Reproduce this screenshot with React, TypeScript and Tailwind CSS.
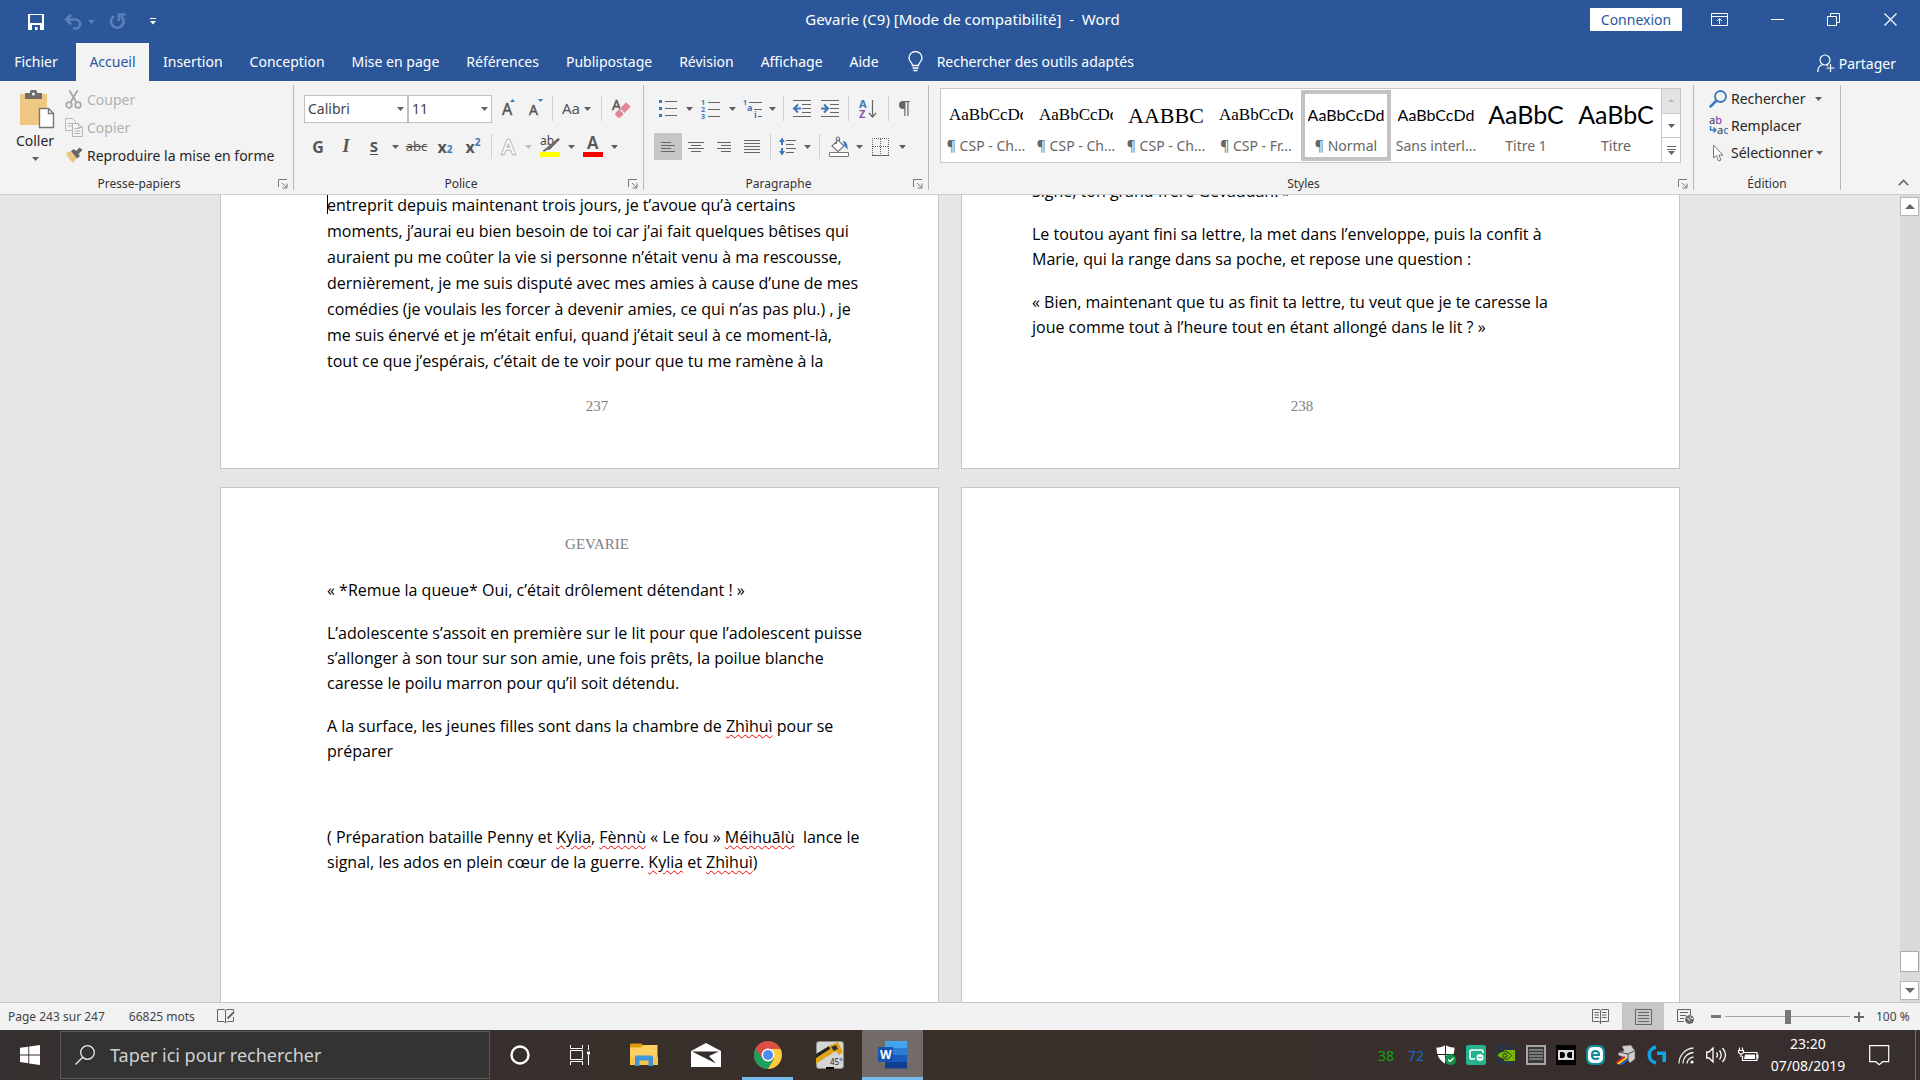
import { useState } from 'react'
import type { ReactNode } from 'react'
import { clsx } from 'clsx'

const UI = "font-['Noto_Sans','Open_Sans',sans-serif]"
const BODY = "font-['Open_Sans','Noto_Sans',sans-serif]"
const SAMPLE = "font-['Lato','Open_Sans',sans-serif]"
const TIMES = "font-['Liberation_Serif',serif]"

const tabs = ['Insertion', 'Conception', 'Mise en page', 'Références', 'Publipostage', 'Révision', 'Affichage', 'Aide']

const styles: { sample: string; name: string; look: string }[] = [
  { sample: 'AaBbCcDd', name: '¶ CSP - Ch...', look: `${TIMES} px-1 text-[17px]` },
  { sample: 'AaBbCcDd', name: '¶ CSP - Ch...', look: `${TIMES} px-1 text-[17px]` },
  { sample: 'AABBC', name: '¶ CSP - Ch...', look: `${TIMES} justify-center text-[22px]` },
  { sample: 'AaBbCcDd', name: '¶ CSP - Fr...', look: `${TIMES} px-1 text-[17px]` },
  { sample: 'AaBbCcDd', name: '¶ Normal', look: `${SAMPLE} justify-center text-[16px]` },
  { sample: 'AaBbCcDd', name: 'Sans interl...', look: `${SAMPLE} justify-center text-[16px]` },
  { sample: 'AaBbC', name: 'Titre 1', look: `${SAMPLE} justify-center text-[25px]` },
  { sample: 'AaBbC', name: 'Titre', look: `${SAMPLE} justify-center text-[25px]` },
]

/* ---------- small pieces ---------- */

function Caret({ className = 'text-[#5f5f5f]' }: { className?: string }) {
  return (
    <svg width="7" height="4" viewBox="0 0 7 4" className={clsx('shrink-0', className)} aria-hidden="true">
      <path d="M0 0h7L3.5 4z" fill="currentColor" />
    </svg>
  )
}

function Tool({ label, className, children }: { label: string; className?: string; children: ReactNode }) {
  return (
    <button
      aria-label={label}
      className={clsx('flex h-[27px] shrink-0 items-center justify-center text-[#555] [&>svg]:overflow-visible', className ?? 'w-7')}
    >
      {children}
    </button>
  )
}

function Drop({ label, className = 'w-3.5', caret }: { label: string; className?: string; caret?: string }) {
  return (
    <Tool label={label} className={className}>
      <Caret className={caret} />
    </Tool>
  )
}

function Sep({ className = 'w-2' }: { className?: string }) {
  return (
    <span className={clsx('flex h-[25px] shrink-0 justify-center', className)}>
      <span className="w-px bg-[#cfcfcf]" />
    </span>
  )
}

function Group({ title, launcher, className, children }: { title: string; launcher?: boolean; className?: string; children: ReactNode }) {
  return (
    <section className={clsx('flex shrink-0', className)}>
      <div className="flex min-w-0 flex-1 flex-col">
        <div className="h-[95px]">{children}</div>
        <div className="flex h-4 items-center">
          <h2 className="flex-1 text-center text-[12px] leading-4 text-[#333]">{title}</h2>
          {launcher && (
            <button aria-label={`${title} : options`} className="mr-[3px] w-3">
              <svg width="10" height="10" viewBox="0 0 10 10" fill="none" stroke="#777">
                <path d="M.5 8V.5H9M4 4l4 4M9 4.500V9H4.500" />
              </svg>
            </button>
          )}
        </div>
      </div>
      <span className="my-1 w-px bg-[#b9b9b9]" />
    </section>
  )
}

function Lines({ rows }: { rows: [number, number][] }) {
  return (
    <svg width={16} height={rows.length * 3} viewBox={`0 0 16 ${rows.length * 3}`} stroke="#666" aria-hidden="true">
      {rows.map(([a, b], i) => (
        <path key={i} d={`M${a} ${i * 3 + 1.5}H${b}`} />
      ))}
    </svg>
  )
}

/* ---------- title bar and tabs ---------- */

function TitleBar() {
  return (
    <header className="flex h-[43px] shrink-0 items-center bg-[#2b579a] text-white">
      <div className="flex flex-1 items-center pl-7">
        <button aria-label="Enregistrer">
          <svg width="16" height="16" viewBox="0 0 16 16">
            <path d="M0 0h16v16H0z" fill="#fff" />
            <path d="M2 1h12v8H2zM4 11h8v5H9.500v-3H7v3H4z" fill="#2b579a" />
          </svg>
        </button>
        <button aria-label="Annuler" className="ml-5 flex items-center gap-[5px] text-[#5b7fb8]">
          <svg width="19" height="16" viewBox="0 0 19 16" fill="none" stroke="currentColor" strokeWidth="2.600">
            <path d="M2 5.500h9.500a4.500 4.500 0 0 1 0 9H9M7 .8 2.200 5.500 7 10.200" />
          </svg>
          <Caret className="text-[#5b7fb8]" />
        </button>
        <button aria-label="Rétablir" className="ml-[14px] text-[#5b7fb8]">
          <svg width="17" height="17" viewBox="0 0 17 17" fill="none" stroke="currentColor" strokeWidth="2.600">
            <path d="M5 3a6.300 6.300 0 1 0 7 .3M16.500 1.500H10V8" />
          </svg>
        </button>
        <button aria-label="Personnaliser" className="ml-6">
          <svg width="6" height="7" viewBox="0 0 6 7" fill="#fff">
            <path d="M0 0h6v1H0zM0 3h6L3 6.500z" />
          </svg>
        </button>
      </div>
      <h1 className="mt-[-5px] whitespace-pre text-[15px]">Gevarie (C9) [Mode de compatibilité]  -  Word</h1>
      <div className="mt-[-4px] flex flex-1 items-center justify-end pr-[23px]">
        <button className="h-[23px] w-[92px] bg-white text-[14px] leading-[23px] text-[#2b579a]">Connexion</button>
        <button aria-label="Options d'affichage du ruban" className="ml-[29px]">
          <svg width="17" height="13" viewBox="0 0 17 13" fill="none" stroke="#fff">
            <path d="M.5.5h16v12H.5zM.5 3.500h16M8.500 11V6M6 8l2.500-2.500L11 8" />
          </svg>
        </button>
        <button aria-label="Réduire" className="ml-[43px]">
          <svg width="13" height="13" viewBox="0 0 13 13" stroke="#fff">
            <path d="M0 6.500h13" />
          </svg>
        </button>
        <button aria-label="Restaurer" className="ml-[43px]">
          <svg width="13" height="13" viewBox="0 0 13 13" fill="none" stroke="#fff">
            <path d="M.5 3.500h9v9h-9zM3.500 3.500v-3h9v9h-3" />
          </svg>
        </button>
        <button aria-label="Fermer" className="ml-[44px]">
          <svg width="13" height="13" viewBox="0 0 13 13" stroke="#fff" strokeWidth="1.200">
            <path d="M.5.5l12 12M12.500.5l-12 12" />
          </svg>
        </button>
      </div>
    </header>
  )
}

function Tabs() {
  return (
    <nav className="flex h-[38px] shrink-0 items-center bg-[#2b579a] text-[14px] text-white">
      <button className="h-full w-[76px] pr-1 pb-0.5">Fichier</button>
      <button className="h-full w-[73px] bg-[#f3f3f3] pb-0.5 text-[#2b579a]">Accueil</button>
      <div className="flex h-full gap-[27px] pr-[29px] pl-[14px]">
        {tabs.map((t) => (
          <button key={t} className="pb-0.5">
            {t}
          </button>
        ))}
      </div>
      <label className="flex flex-1 items-center gap-[14px] pb-0.5">
        <svg width="15" height="21" viewBox="0 0 15 21" fill="none" stroke="#fff" strokeWidth="1.300">
          <path d="M4.500 14.500c0-3-3.500-4-3.500-7.500a6.500 6.500 0 0 1 13 0c0 3.500-3.500 4.500-3.500 7.500zM4.500 17h6M5.500 19.500h4" />
        </svg>
        <input
          aria-label="Rechercher des outils"
          placeholder="Rechercher des outils adaptés"
          className="w-60 bg-transparent placeholder:text-white focus:outline-none"
        />
      </label>
      <button className="flex items-center gap-1 pt-0.5 pr-6">
        <svg width="18" height="19" viewBox="0 0 18 19" fill="none" stroke="#fff" strokeWidth="1.200">
          <circle cx="8" cy="6" r="5" />
          <path d="M.8 18c0-4 2-7 5.500-7.500M9 10.500c1 .3 1.500.8 2 1.500M13.500 10v8M9.500 14h8" />
        </svg>
        Partager
      </button>
    </nav>
  )
}

/* ---------- ribbon ---------- */

function Clipboard() {
  return (
    <Group title="Presse-papiers" launcher className="w-[294px]">
      <div className="flex pl-[14px] text-[14px]">
        <button className="flex w-[42px] flex-col items-center pt-[9px] text-[#262626]">
          <svg width="36" height="39" viewBox="0 0 36 39" className="ml-1">
            <path d="M1 4h27v31H1z" fill="#eec882" />
            <path d="M6 3h5V1.500C11 .5 12 0 13 0h3c1 0 2 .5 2 1.500V3h5v6H6z" fill="#6d6d6d" />
            <circle cx="14.500" cy="4" r="1.500" fill="#f3f3f3" />
            <path d="M20.500 18.500h9l5 5v14h-14z" fill="#fff" stroke="#777" strokeWidth="1.400" />
            <path d="M29.500 18.500v5h5" fill="none" stroke="#777" strokeWidth="1.400" />
          </svg>
          <span className="mt-0.5 leading-5">Coller</span>
          <span className="mt-1.5">
            <Caret />
          </span>
        </button>
        <div className="ml-[9px] flex flex-col pt-1">
          <button disabled className="flex h-7 items-center gap-1 text-[#b1b1b1]">
            <svg width="18" height="19" viewBox="0 0 18 19" fill="none" stroke="#a9a9a9" strokeWidth="1.800">
              <circle cx="4" cy="15" r="2.800" />
              <circle cx="13" cy="15" r="2.800" />
              <path d="M5.500 12.500 12.500.5M11.500 12.500 4.500.5" />
            </svg>
            Couper
          </button>
          <button disabled className="flex h-7 items-center gap-1 text-[#b1b1b1]">
            <svg width="18" height="19" viewBox="0 0 18 19" fill="#f3f3f3" stroke="#b5b5b5">
              <path d="M.5.5h7l3 3v9H.5zM2.500 5.500h5M2.500 8h5" />
              <path d="M7.500 5.500h6l4 4v9h-10zM9.500 10.500h5M9.500 13h6M9.500 15.500h6M13.500 5.500v4h4" />
            </svg>
            Copier
          </button>
          <button className="flex h-7 items-center gap-1 text-[#262626]">
            <svg width="18" height="17" viewBox="0 0 18 17">
              <path d="M1 6l5-2 6 7-4 5C5 13 2 10 1 6z" fill="#eec882" />
              <path d="M6 4l3-2 2 2 3.500-3.500 3 2.500-4 4L15 9l-3 2.500z" fill="#666" />
            </svg>
            Reproduire la mise en forme
          </button>
        </div>
      </div>
    </Group>
  )
}

function Combo({ label, options, className }: { label: string; options: string[]; className: string }) {
  const [value, setValue] = useState(options[0])
  return (
    <span className={clsx('relative shrink-0', className)}>
      <select
        aria-label={label}
        value={value}
        onChange={(e) => setValue(e.target.value)}
        className="h-7 w-full appearance-none border border-[#c1c1c1] bg-white pl-[3px] text-[14px] text-[#444]"
      >
        {options.map((o) => (
          <option key={o}>{o}</option>
        ))}
      </select>
      <span className="pointer-events-none absolute top-3 right-1">
        <Caret />
      </span>
    </span>
  )
}

function FontGroup() {
  return (
    <Group title="Police" launcher className="w-[350px]">
      <div className="flex h-[55px] items-center pl-[10px]">
        <Combo label="Police" options={['Calibri', 'Arial']} className="w-[104px]" />
        <Combo label="Taille" options={['11', '12', '14']} className="w-[84px]" />
        <Tool label="Augmenter la taille" className="ml-0.5 w-[30px]">
          <svg width="16" height="20" viewBox="0 0 16 20">
            <text x="1" y="16" fontSize="16" fill="#555" stroke="#555" strokeWidth=".4">A</text>
            <path d="M9 3l2.500-3L14 3z" fill="#3b78bd" />
          </svg>
        </Tool>
        <Tool label="Réduire la taille" className="w-6">
          <svg width="16" height="20" viewBox="0 0 16 20">
            <text x="1" y="16" fontSize="14" fill="#555" stroke="#555" strokeWidth=".4">A</text>
            <path d="M10 0h5l-2.500 3z" fill="#3b78bd" />
          </svg>
        </Tool>
        <Sep />
        <Tool label="Modifier la casse" className="w-[41px] gap-1 text-[15px]">
          Aa
          <Caret />
        </Tool>
        <Sep />
        <Tool label="Effacer la mise en forme" className="w-8">
          <svg width="19" height="20" viewBox="0 0 19 20">
            <text x="0" y="11" fontSize="14" fill="#555" stroke="#555" strokeWidth=".4">A</text>
            <path d="M3 14l4-4 5 5-4 4H6l-3-3zM8 9l6-6 5 4.500-6.500 7z" fill="#e6859a" stroke="#f3f3f3" strokeWidth=".6" />
          </svg>
        </Tool>
      </div>
      <div className="mt-[-3px] flex items-center pl-[10px]">
        <Tool label="Gras" className="w-7 text-[16px] font-bold">G</Tool>
        <Tool label="Italique" className={clsx('w-7 text-[18px] font-bold italic', TIMES)}>I</Tool>
        <Tool label="Souligné" className="w-7 text-[15px] font-bold underline underline-offset-2">S</Tool>
        <Drop label="Style de soulignement" />
        <Tool label="Barré" className="w-[29px] text-[13px] line-through">abc</Tool>
        <Tool label="Indice" className="w-7 text-[16px] font-bold">
          x<sub className="text-[10px] text-[#3b78bd]">2</sub>
        </Tool>
        <Tool label="Exposant" className="w-7 text-[16px] font-bold">
          x<sup className="text-[10px] text-[#3b78bd]">2</sup>
        </Tool>
        <Sep />
        <Tool label="Effets de texte" className="w-[27px]">
          <svg width="20" height="20" viewBox="0 0 20 20">
            <text x="3" y="17" fontSize="20" fill="#fff" stroke="#bdbdbd" strokeWidth="2.400" paintOrder="stroke">A</text>
          </svg>
        </Tool>
        <Drop label="Effets" className="w-3" caret="text-[#bdbdbd]" />
        <Tool label="Surlignage" className="w-[31px]">
          <svg width="20" height="21" viewBox="0 0 20 21">
            <text x="0" y="9" fontSize="12" fill="#444">ab</text>
            <path d="M18 2.500l1.500 1L10 13l-3 .5L5 15H3l5-4z" fill="#6d6d6d" stroke="#6d6d6d" />
            <path d="M0 16h20v5H0z" fill="#ff0" />
          </svg>
        </Tool>
        <Drop label="Couleur de surlignage" className="w-3" />
        <Tool label="Couleur de police" className="w-[31px]">
          <svg width="20" height="21" viewBox="0 0 20 21">
            <text x="4" y="13" fontSize="17" fontWeight="600" fill="#555">A</text>
            <path d="M0 16h20v5H0z" fill="red" />
          </svg>
        </Tool>
        <Drop label="Couleur" className="w-3" />
      </div>
    </Group>
  )
}

function ParagraphGroup() {
  return (
    <Group title="Paragraphe" launcher className="w-[285px]">
      <div className="flex h-[55px] items-center pl-[10px]">
        <Tool label="Puces">
          <svg width="18" height="18" viewBox="0 0 18 18">
            <path d="M0 0h3v3H0zM0 7h3v3H0zM0 14h3v3H0z" fill="#3b78bd" />
            <path d="M6 1.500h12M6 8.500h12M6 15.500h12" stroke="#666" />
          </svg>
        </Tool>
        <Drop label="Bibliothèque de puces" />
        <Tool label="Numérotation" className="w-[29px]">
          <svg width="19" height="20" viewBox="0 0 19 20">
            <g fontSize="7" fontWeight="700" fill="#3b78bd">
              <text x="0" y="6">1</text>
              <text x="0" y="13">2</text>
              <text x="0" y="20">3</text>
            </g>
            <path d="M7 3.500h12M7 10.500h12M7 17.500h12" stroke="#666" />
          </svg>
        </Tool>
        <Drop label="Bibliothèque de numérotation" />
        <Tool label="Liste à plusieurs niveaux" className="w-[26px]">
          <svg width="19" height="20" viewBox="0 0 19 20">
            <g fontWeight="700" fill="#3b78bd">
              <text x="0" y="6" fontSize="7">1</text>
              <text x="4" y="12" fontSize="9">a</text>
              <text x="11" y="19" fontSize="9">i</text>
            </g>
            <path d="M6 3.500h13M11 10.500h8M15 17.500h4" stroke="#666" />
          </svg>
        </Tool>
        <Drop label="Niveaux" />
        <Sep />
        <Tool label="Diminuer le retrait" className="w-[29px]">
          <svg width="18" height="17" viewBox="0 0 18 17">
            <path d="M0 .5h18M9 4.500h9M9 8.500h9M9 12.500h9M0 16.500h18" stroke="#666" />
            <path d="M8 8.500H1M5 4.500l-4 4 4 4" fill="none" stroke="#3b78bd" strokeWidth="2" />
          </svg>
        </Tool>
        <Tool label="Augmenter le retrait">
          <svg width="18" height="17" viewBox="0 0 18 17">
            <path d="M0 .5h18M9 4.500h9M9 8.500h9M9 12.500h9M0 16.500h18" stroke="#666" />
            <path d="M0 8.500h7M3 4.500l4 4-4 4" fill="none" stroke="#3b78bd" strokeWidth="2" />
          </svg>
        </Tool>
        <Sep />
        <Tool label="Trier" className="w-8">
          <svg width="18" height="20" viewBox="0 0 18 20">
            <text x="0" y="9" fontSize="11" fontWeight="700" fill="#3b78bd">A</text>
            <text x="0" y="19" fontSize="11" fontWeight="700" fill="#8a4fb0">Z</text>
            <path d="M13.500 1v17M10 14l3.500 4 3.500-4" fill="none" stroke="#666" strokeWidth="1.200" />
          </svg>
        </Tool>
        <Sep />
        <Tool label="Afficher tout" className="w-6">
          <svg width="11" height="15" viewBox="0 0 11 15" fill="#666">
            <path d="M11 0v1H9.500v14h-1.200V1H6.500v14H5.300V8H4a4 4 0 0 1 0-8z" />
          </svg>
        </Tool>
      </div>
      <div className="mt-[-3px] flex items-center pl-[10px]">
        <Tool label="Aligner à gauche" className="w-7 bg-[#c6c6c6]">
          <Lines rows={[[1, 11], [1, 15], [1, 11], [1, 15]]} />
        </Tool>
        <Tool label="Centrer">
          <Lines rows={[[0, 16], [3, 13], [0, 16], [3, 13]]} />
        </Tool>
        <Tool label="Aligner à droite">
          <Lines rows={[[1, 15], [5, 15], [1, 15], [5, 15]]} />
        </Tool>
        <Tool label="Justifier">
          <Lines rows={[[0, 16], [0, 16], [0, 16], [0, 16], [0, 16]]} />
        </Tool>
        <Sep />
        <Tool label="Interligne">
          <svg width="18" height="19" viewBox="0 0 18 19">
            <path d="M0 5l3-4.500L6 5H4v3H2V5zM0 14h2v-3h2v3h2l-3 4.500z" fill="#3b78bd" />
            <path d="M7 3.500h10M7 7.500h8M7 11.500h10M7 15.500h8" stroke="#666" />
          </svg>
        </Tool>
        <Drop label="Espacement" className="w-[10px]" />
        <Sep className="w-3.5" />
        <Tool label="Trame de fond" className="w-[26px]">
          <svg width="20" height="21" viewBox="0 0 20 21" fill="none" stroke="#777">
            <path d="M9 4l6 6-6 5.500L3 10zM7.500 8V2.500a1.500 1.500 0 0 1 3 0V6" strokeWidth="1.200" fill="#fff" />
            <path d="M14 5c3 0 5 3 4.500 9-1-2-2-3-3-4z" fill="#3b78bd" stroke="none" />
            <path d="M.5 16.500h19v4H.5z" fill="#fff" />
          </svg>
        </Tool>
        <Drop label="Couleur de trame" />
        <Tool label="Bordures" className="w-[29px]">
          <svg width="17" height="18" viewBox="0 0 17 18" fill="none" stroke="#666">
            <path d="M.5 17V.5h16V17M8.500 1v16M1 8.500h15" strokeDasharray="1 1" />
            <path d="M0 17.500h17" />
          </svg>
        </Tool>
        <Drop label="Choix des bordures" />
      </div>
    </Group>
  )
}

function StylesGroup() {
  return (
    <Group title="Styles" launcher className="w-[765px]">
      <div className="pt-[7px] pr-3 pl-[11px]">
        <div className="flex h-[75px] border border-[#c8c8c8] bg-white">
          {styles.map((s, i) => (
            <button
              key={i}
              className={clsx(
                'mt-px flex h-[71px] w-[90px] shrink-0 flex-col overflow-hidden border-4',
                i === 4 ? 'border-[#c3c3c3]' : 'border-transparent',
              )}
            >
              <span className={clsx('flex h-[42px] w-full items-center overflow-hidden whitespace-nowrap text-black', s.look)}>
                <span className="overflow-hidden">{s.sample}</span>
              </span>
              <span className="w-full text-center text-[14px] leading-5 whitespace-nowrap text-[#666]">{s.name}</span>
            </button>
          ))}
          <div className="ml-auto flex w-[19px] flex-col border-l border-[#c8c8c8]">
            <button aria-label="Précédent" className="flex flex-1 items-center justify-center bg-[#e3e3e3]">
              <svg width="6" height="3" viewBox="0 0 6 3" fill="#b5b5b5">
                <path d="M0 3h6L3 0z" />
              </svg>
            </button>
            <button aria-label="Suivant" className="flex flex-1 items-center justify-center border-y border-[#c8c8c8]">
              <Caret />
            </button>
            <button aria-label="Autres styles" className="flex flex-1 items-center justify-center">
              <svg width="9" height="9" viewBox="0 0 9 9" fill="#666">
                <path d="M0 0h9v1H0zM0 3h9v1H0zM1 5h7L4.500 9z" />
              </svg>
            </button>
          </div>
        </div>
      </div>
    </Group>
  )
}

function EditGroup() {
  return (
    <Group title="Édition" className="w-[147px]">
      <div className="flex flex-col pt-1 pl-[15px] text-[14px] text-[#262626]">
        <button className="flex h-[27px] items-center">
          <svg width="18" height="18" viewBox="0 0 18 18" fill="none" stroke="#3b78bd">
            <circle cx="11.500" cy="6.500" r="5.500" strokeWidth="1.800" />
            <path d="M7.500 10.500.8 17.200" strokeWidth="2.600" />
          </svg>
          <span className="mr-[10px] ml-1">Rechercher</span>
          <Caret />
        </button>
        <button className="flex h-[27px] items-center">
          <svg width="19" height="19" viewBox="0 0 19 19" fontSize="11" fontWeight="500">
            <text x="0" y="8" fill="#555">a<tspan fill="#8a4fb0">b</tspan></text>
            <text x="8" y="18" fill="#555">a<tspan fill="#3b78bd">c</tspan></text>
            <path d="M1.500 10v4h5M4.500 11.500 7 14l-2.500 2.500" fill="none" stroke="#3b78bd" strokeWidth="1.400" />
          </svg>
          <span className="ml-[3px]">Remplacer</span>
        </button>
        <button className="flex h-[27px] items-center">
          <svg width="18" height="18" viewBox="0 0 18 18" fill="#fff" stroke="#777">
            <path d="M4.500 1v13l3-2.500 2 5.500 2.500-1-2.200-5H14z" />
          </svg>
          <span className="mr-[3px] ml-1">Sélectionner</span>
          <Caret />
        </button>
      </div>
    </Group>
  )
}

function Ribbon() {
  return (
    <div className="flex h-[114px] shrink-0 border-b border-[#cdcdcd] bg-[#f3f3f3]">
      <Clipboard />
      <FontGroup />
      <ParagraphGroup />
      <StylesGroup />
      <EditGroup />
      <div className="flex flex-1 items-end justify-end pr-[11px] pb-2">
        <button aria-label="Réduire le ruban">
          <svg width="11" height="7" viewBox="0 0 11 7" fill="none" stroke="#666" strokeWidth="1.600">
            <path d="M.8 6.200 5.500 1.500l4.700 4.700" />
          </svg>
        </button>
      </div>
    </div>
  )
}

/* ---------- document ---------- */

function Err({ children }: { children: ReactNode }) {
  return <span className="underline decoration-[#f00] decoration-wavy decoration-1 underline-offset-2">{children}</span>
}

function Para({ lines, leading = 'leading-[25px]' }: { lines: ReactNode[]; leading?: string }) {
  return (
    <p className={clsx('mb-[18px] whitespace-pre', leading)}>
      {lines.map((l, i) => (
        <span key={i} className="block">{l}</span>
      ))}
    </p>
  )
}

function Margin({ className, children }: { className: string; children: ReactNode }) {
  return <p className={clsx('text-center text-[15px] leading-5 text-[#808080]', TIMES, className)}>{children}</p>
}

function Doc() {
  return (
    <main className="flex min-h-0 flex-1 bg-[#e6e6e6]">
      <div className={clsx('flex min-w-0 flex-1 flex-col items-center overflow-hidden text-[16px] text-black', BODY)}>
        <div className="flex gap-[22px]">
          <article className="flex h-[274px] w-[719px] flex-col justify-end overflow-hidden border border-t-0 border-[#c6c6c6] bg-white pr-[71px] pl-[106px]">
            <div className="relative">
              <span className="absolute top-[-4px] left-0 h-[26px] w-px bg-black" />
              <Para
                leading="leading-[26px]"
                lines={[
                  'entreprit depuis maintenant trois jours, je t’avoue qu’à certains',
                  'moments, j’aurai eu bien besoin de toi car j’ai fait quelques bêtises qui',
                  'auraient pu me coûter la vie si personne n’était venu à ma rescousse,',
                  'dernièrement, je me suis disputé avec mes amies à cause d’une de mes',
                  'comédies (je voulais les forcer à devenir amies, ce qui n’as pas plu.) , je',
                  'me suis énervé et je m’était enfui, quand j’était seul à ce moment-là,',
                  'tout ce que j’espérais, c’était de te voir pour que tu me ramène à la',
                ]}
              />
            </div>
            <Margin className="mt-1 mb-[52px]">237</Margin>
          </article>
          <article className="flex h-[274px] w-[719px] flex-col justify-end overflow-hidden border border-t-0 border-[#c6c6c6] bg-white pr-[107px] pl-[70px]">
            <Para lines={['Signé, ton grand frère Gévaudan. »']} />
            <Para
              lines={[
                'Le toutou ayant fini sa lettre, la met dans l’enveloppe, puis la confit à',
                'Marie, qui la range dans sa poche, et repose une question :',
              ]}
            />
            <Para
              lines={[
                '« Bien, maintenant que tu as finit ta lettre, tu veut que je te caresse la',
                'joue comme tout à l’heure tout en étant allongé dans le lit ? »',
              ]}
            />
            <Margin className="mt-[38px] mb-[52px]">238</Margin>
          </article>
        </div>
        <div className="mt-[18px] flex flex-1 gap-[22px]">
          <article className="w-[719px] border border-b-0 border-[#c6c6c6] bg-white pt-[46px] pr-[71px] pl-[106px]">
            <Margin className="mb-6">GEVARIE</Margin>
            <Para lines={['« *Remue la queue* Oui, c’était drôlement détendant ! »']} />
            <Para
              lines={[
                'L’adolescente s’assoit en première sur le lit pour que l’adolescent puisse',
                's’allonger à son tour sur son amie, une fois prêts, la poilue blanche',
                'caresse le poilu marron pour qu’il soit détendu.',
              ]}
            />
            <Para
              lines={[<>A la surface, les jeunes filles sont dans la chambre de <Err>Zhìhuì</Err> pour se</>, 'préparer']}
            />
            <Para lines={[' ']} />
            <Para
              lines={[
                <>
                  ( Préparation bataille Penny et <Err>Kylia</Err>, <Err>Fènnù</Err> « Le fou » <Err>Méihuālù</Err>{'  '}lance le
                </>,
                <>
                  signal, les ados en plein cœur de la guerre. <Err>Kylia</Err> et <Err>Zhìhuì</Err>)
                </>,
              ]}
            />
          </article>
          <article className="w-[719px] border border-b-0 border-[#c6c6c6] bg-white" />
        </div>
      </div>
      <div className="flex w-5 flex-col bg-[#dadada] py-0.5 pr-px">
        <button aria-label="Défiler vers le haut" className="flex h-[19px] items-center justify-center border border-[#b5b5b5] bg-white">
          <svg width="10" height="5" viewBox="0 0 10 5" fill="#666">
            <path d="M0 5h10L5 0z" />
          </svg>
        </button>
        <div className="mt-auto mb-[9px] h-[21px] border border-[#ababab] bg-white" />
        <button aria-label="Défiler vers le bas" className="flex h-[19px] items-center justify-center border border-[#b5b5b5] bg-white">
          <svg width="10" height="5" viewBox="0 0 10 5" fill="#666">
            <path d="M0 0h10L5 5z" />
          </svg>
        </button>
      </div>
    </main>
  )
}

function StatusBar() {
  const [zoom, setZoom] = useState(100)
  return (
    <footer className="flex h-7 shrink-0 items-center border-t border-[#c6c6c6] bg-[#f2f2f2] pl-2 text-[12px] text-[#444]">
      <span>Page 243 sur 247</span>
      <span className="ml-6">66825 mots</span>
      <button aria-label="Vérification" className="ml-[22px]">
        <svg width="18" height="15" viewBox="0 0 18 15" fill="none" stroke="#666">
          <path d="M8.500 14 7 12.500H.5V.5H7l1.500 1 1.500-1h6.500v2M8.500 1.500V14l1.500-1.500h6.500V8" />
          <path d="M10.500 9.500 17 3" strokeWidth="2" />
        </svg>
      </button>
      <div className="ml-auto flex h-full items-center pr-[9px]">
        <button aria-label="Mode lecture" className="mr-[13px]">
          <svg width="17" height="15" viewBox="0 0 17 15" fill="none" stroke="#666">
            <path d="M8.500 1.500V15M.5.5H7l1.500 1 1.500-1h6.500v12H10l-1.500 1-1.500-1H.5zM2.500 3.500H7M2.500 6H7M2.500 8.500H7M10 3.500h4.500M10 6h4.500M10 8.500h4.500" />
          </svg>
        </button>
        <button aria-label="Page" className="flex h-full w-[42px] items-center justify-center bg-[#c6c6c6]">
          <svg width="17" height="16" viewBox="0 0 17 16" fill="none" stroke="#666">
            <path d="M.5.5h16v15H.5zM3 3.500h11M3 6.500h11M3 9.500h11M3 12.500h11" />
          </svg>
        </button>
        <button aria-label="Web" className="ml-[13px]">
          <svg width="17" height="15" viewBox="0 0 17 15" fill="none" stroke="#666">
            <path d="M7 12.500H.5V.5h13V6M3 3.500h8M3 6.500h6M3 9.500h4" />
            <circle cx="12.500" cy="10.500" r="4" fill="#666" />
            <path d="M10 9l2 1 .5 2M13 7.500l1 2h2" stroke="#f2f2f2" />
          </svg>
        </button>
        <button aria-label="Zoom arrière" className="ml-[17px] h-[3px] w-[10px] bg-[#777]" />
        <input
          type="range"
          aria-label="Zoom"
          min={10}
          max={190}
          value={zoom}
          onChange={(e) => setZoom(Number(e.target.value))}
          className="mx-1 h-px w-[125px] appearance-none bg-[#a6a6a6] [&::-webkit-slider-thumb]:h-[14px] [&::-webkit-slider-thumb]:w-[6px] [&::-webkit-slider-thumb]:appearance-none [&::-webkit-slider-thumb]:bg-[#777]"
        />
        <button aria-label="Zoom avant">
          <svg width="10" height="10" viewBox="0 0 10 10" stroke="#666" strokeWidth="2">
            <path d="M0 5h10M5 0v10" />
          </svg>
        </button>
        <span className="ml-3 w-[35px] whitespace-nowrap">{zoom} %</span>
      </div>
    </footer>
  )
}

/* ---------- Windows taskbar ---------- */

function Apps() {
  return (
    <div className="flex h-full items-stretch">
      <button aria-label="Cortana" className="flex w-[60px] items-center justify-center">
        <svg width="20" height="20" viewBox="0 0 20 20" fill="none" stroke="#fff" strokeWidth="2.400">
          <circle cx="10" cy="10" r="8.500" />
        </svg>
      </button>
      <button aria-label="Affichage des tâches" className="flex w-[60px] items-center justify-center">
        <svg width="21" height="20" viewBox="0 0 21 20" fill="none" stroke="#fff">
          <path d="M.5 0v3.500h12V0M.5 5.500h12v9H.5zM.5 20v-3.500h12V20M18.500 0v5M18.500 10v10" />
          <path d="M17 6.500h3v3h-3z" fill="#fff" stroke="none" />
        </svg>
      </button>
      <button aria-label="Explorateur" className="flex w-[67px] items-center justify-center">
        <svg width="28" height="24" viewBox="0 0 28 24">
          <path d="M0 2C0 1 .5.5 1.500.5h10L13 2.500V5H0z" fill="#dd9a0b" />
          <path d="M0 4.500h11l2-2.500h14.500V22H0z" fill="#fdd063" />
          <path d="M0 14h28v8H0z" fill="#f7c54c" />
          <path d="M5 23v-9c0-1 .8-1.500 1.500-1.500h15c.7 0 1.500.5 1.500 1.500v9h-4.500v-5.500h-9V23z" fill="#3f97d8" />
        </svg>
      </button>
      <button aria-label="Courrier" className="flex w-[58px] items-center justify-center">
        <svg width="30" height="24" viewBox="0 0 30 24">
          <path d="M0 8 15 0l15 8v16H0z" fill="#fff" />
          <path d="M1 8.500h27L18 13l7 7.500z" fill="#332c2a" />
        </svg>
      </button>
      <button aria-label="Chrome" className="flex w-[65px] flex-col items-center">
        <svg width="28" height="28" viewBox="0 0 28 28" className="mt-[11px]">
          <circle cx="14" cy="14" r="14" fill="#dd4f42" />
          <path d="M1.900 7A14 14 0 0 0 14 28l6-10.500H8z" fill="#1aa15f" />
          <path d="M26.500 8H14l6.200 9.500L14 28A14 14 0 0 0 26.500 8z" fill="#ffcd42" />
          <circle cx="14" cy="14" r="6.400" fill="#fff" />
          <circle cx="14" cy="14" r="5" fill="#4c8bf5" />
        </svg>
        <span className="mt-auto h-[3px] w-[51px] bg-[#76b9ed]" />
      </button>
      <button aria-label="Mesure" className="flex w-[62px] items-center justify-center pr-0.5">
        <svg width="28" height="28" viewBox="0 0 28 28">
          <rect x=".5" y=".5" width="27" height="27" rx="2.500" fill="#d5d5d5" stroke="#8b8b8b" />
          <path d="M0 13 13 5l4 4L5 18l-5 2z" fill="#222" />
          <path d="M0 17 14 8l-1-3 9-4 5 10-4 3-3-4L4 20l-4 3z" fill="#e2a413" />
          <path d="M15 6l5-2 2 4-4 2z" fill="#333" />
          <text x="14" y="24" fontSize="8" fill="#222">45°</text>
          <path d="M10 26h8v2h-8z" fill="#000" />
        </svg>
      </button>
      <button aria-label="Word" className="flex w-[61px] flex-col items-center border-b-[3px] border-[#76b9ed] bg-[#736b67]">
        <svg width="30" height="28" viewBox="0 0 30 28" className="mt-[11px]">
          <path d="M7 0h22v7H7z" fill="#41a5ee" />
          <path d="M7 7h22v7H7z" fill="#2b7cd3" />
          <path d="M7 14h22v7H7z" fill="#185abd" />
          <path d="M7 21h22v6.500H7z" fill="#103f91" />
          <rect x="0" y="6" width="15" height="15" rx="1" fill="#1853b4" />
          <text x="2" y="18" fontSize="12" fontWeight="700" fill="#fff">W</text>
        </svg>
      </button>
    </div>
  )
}

function Tray() {
  return (
    <div className="ml-auto flex h-full items-center">
      <div className="flex items-center gap-[10px]">
        <span className="w-5 text-center text-[14px] text-[#12a512]">38</span>
        <span className="w-5 text-center text-[14px] text-[#1569c7]">72</span>
        <svg width="20" height="20" viewBox="0 0 20 20">
          <path d="M9.500 0c3 2 6 2.500 9 2.500 0 8-3 13-9 16.500C3.500 15.500.5 10.500.5 2.500c3 0 6-.5 9-2.500z" fill="#fff" />
          <path d="M9.500 0v19M.5 9.500h18" stroke="#222" />
          <circle cx="14.500" cy="14.500" r="5.500" fill="#12924b" />
          <path d="M12 14.500l2 2 3.500-3.500" fill="none" stroke="#fff" strokeWidth="1.300" />
        </svg>
        <svg width="20" height="20" viewBox="0 0 20 20">
          <rect width="20" height="20" rx="2.500" fill="#25b28f" />
          <path d="M9 14H5.500A1.500 1.500 0 0 1 4 12.500v-6A1.500 1.500 0 0 1 5.500 5h10A1.500 1.500 0 0 1 17 6.500V8" fill="none" stroke="#fff" strokeWidth="1.600" />
          <circle cx="14" cy="12.500" r="3.500" fill="#fff" />
          <path d="M12 12.500h4" stroke="#25b28f" />
        </svg>
        <svg width="20" height="20" viewBox="0 0 20 20">
          <rect width="20" height="20" rx="1" fill="#2b3440" />
          <path d="M8 5h11v11H8z" fill="#76b900" />
          <path d="M1 10.500C4 6 8 5.500 11 7s4 3 4.500 3.500C13 14 10 15 7 14s-5-2-6-3.500z" fill="#76b900" stroke="#26331a" />
          <circle cx="9" cy="10.500" r="2" fill="none" stroke="#26331a" />
        </svg>
        <svg width="20" height="20" viewBox="0 0 20 20">
          <path d="M1 1h18v18H1z" fill="#3a3a3a" stroke="#a5a5a5" strokeWidth="2" />
          <path d="M3 5h14M3 8h14M3 11h14M3 14h14" stroke="#8f8f8f" strokeWidth="1.400" />
        </svg>
        <svg width="20" height="20" viewBox="0 0 20 20">
          <path d="M0 0h20v20H0z" fill="#000" />
          <path d="M2 5h16v10H2z" fill="#ddd" />
          <path d="M4 7h2a3 3 0 0 1 0 6H4zM16 7h-2a3 3 0 0 0 0 6h2z" fill="#000" />
        </svg>
        <svg width="20" height="20" viewBox="0 0 20 20">
          <rect width="19" height="20" rx="6" fill="#118a98" />
          <rect x="2" y="2" width="15" height="16" rx="5" fill="#fff" />
          <path d="M6 10h7c0-3-1.500-4-3.500-4S6 7.500 6 10s1.500 4 3.500 4c1.500 0 2.500-.4 3.300-1.200" fill="none" stroke="#118a98" strokeWidth="2.200" />
        </svg>
        <svg width="20" height="20" viewBox="0 0 20 20">
          <path d="M6 1l9-1 4 6v8l-5 4-3-4-9-4 1-3 5-1z" fill="#cfcfcf" stroke="#555" strokeWidth=".6" />
          <path d="M3 7l9 2 6-3M12 9v6" stroke="#444" fill="none" />
          <path d="M0 17l8-6 1.500 1.500L1 19z" fill="#e22" />
          <path d="M1 18.500l8.500-6 1 1.500L3 19.500z" fill="#fd2" />
          <path d="M3 19.500l7.500-5 .5 1.500-5 4z" fill="#2a5de0" />
        </svg>
        <svg width="20" height="20" viewBox="0 0 20 20" fill="none" stroke="#0fa4e6" strokeWidth="3.600">
          <path d="M10 2.100A8 8 0 0 0 10 17.900M11 8.300h7.200V17" />
        </svg>
        <svg width="20" height="20" viewBox="0 0 20 20" fill="none" stroke="#e9e9e9" strokeWidth="1.300">
          <path d="M3 18.500A15.500 15.500 0 0 1 17.500 3M7 18.500A11 11 0 0 1 17.500 7.500M11 18.500a7 7 0 0 1 6.500-6.500" />
          <circle cx="16" cy="17" r="1.600" fill="#fff" stroke="none" />
        </svg>
        <svg width="22" height="20" viewBox="0 0 22 20" fill="none" stroke="#fff" strokeWidth="1.300">
          <path d="M.7 7H3l4-4v14l-4-4H.700zM10.500 7.500q2 2.500 0 5M13.500 5.500q3.500 4.500 0 9M16.500 3q6 7 0 14" />
        </svg>
        <svg width="21" height="16" viewBox="0 0 21 16" fill="none" stroke="#fff" strokeWidth="1.200">
          <path d="M5.500 5.500H19v8H4.500V9" />
          <path d="M7 7.500h10v4.500H6z" fill="#fff" stroke="none" />
          <path d="M19.500 7.500v4" strokeWidth="2" />
          <path d="M1.500.5v3M4.500.5v3M.5 3.500h5v2L4 7H2L.5 5.500zM3 7v3" />
        </svg>
      </div>
      <div className="ml-[10px] w-[78px] text-center text-[14px] leading-[22px] text-white">
        <div>23:20</div>
        <div>07/08/2019</div>
      </div>
      <button aria-label="Notifications" className="mr-[25px] ml-[22px]">
        <svg width="21" height="21" viewBox="0 0 21 21" fill="none" stroke="#fff" strokeWidth="1.200">
          <path d="M.7.7h19v16h-6l-3.500 3-3.500-3h-6z" />
        </svg>
      </button>
      <span className="mr-1 h-full w-px bg-[#7a736f]" />
    </div>
  )
}

function Taskbar() {
  return (
    <div className="flex h-[50px] shrink-0 items-center bg-linear-to-r from-[#35302f] via-[#3a2f29] to-[#372e2e]">
      <button aria-label="Démarrer" className="flex w-[60px] justify-center">
        <svg width="20" height="20" viewBox="0 0 20 20" fill="#fff">
          <path d="M0 2.800 8.300 1.700v7.800H0zM9.200 1.500 20 0v9.500H9.200zM0 10.400h8.300v7.800L0 17.100zM9.200 10.400H20V20L9.200 18.400z" />
        </svg>
      </button>
      <label className="flex h-12 w-[430px] items-center gap-[15px] border border-[#5c5a5a] bg-[#333] pl-[14px]">
        <svg width="20" height="20" viewBox="0 0 20 20" fill="none" stroke="#eee" strokeWidth="1.300">
          <circle cx="12.500" cy="7.500" r="6.800" />
          <path d="M7.500 12.500.5 19.500" />
        </svg>
        <input
          aria-label="Rechercher dans Windows"
          placeholder="Taper ici pour rechercher"
          className="w-80 bg-transparent text-[18px] text-white placeholder:text-[#d0d0d0] focus:outline-none"
        />
      </label>
      <Apps />
      <Tray />
    </div>
  )
}

export default function App() {
  return (
    <div className={clsx('flex h-screen w-full flex-col overflow-hidden', UI)}>
      <TitleBar />
      <Tabs />
      <Ribbon />
      <Doc />
      <StatusBar />
      <Taskbar />
    </div>
  )
}
